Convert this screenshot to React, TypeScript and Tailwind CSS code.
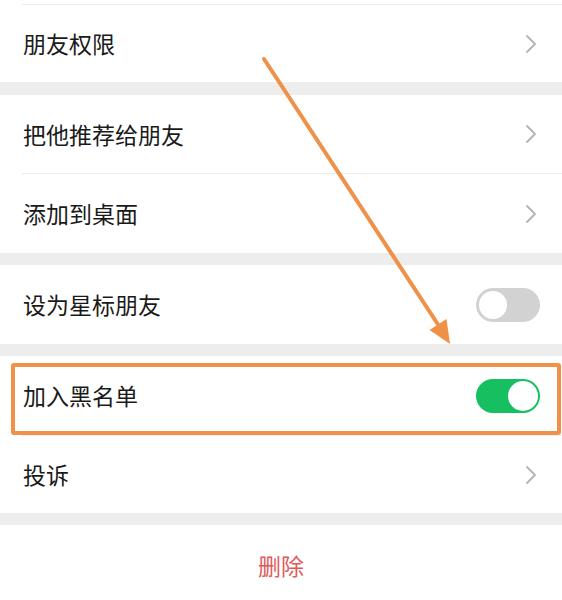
import React from "react";

const font = { fontFamily: '"Noto Sans CJK SC", "Noto Sans", sans-serif' };

function Chevron() {
  return (
    <svg width="14" height="20" viewBox="0 0 14 20" className="mr-[24px]">
      <path d="M3 2 L11 10 L3 18" fill="none" stroke="#b3b3b3" strokeWidth="1.8" strokeLinecap="round" strokeLinejoin="round" />
    </svg>
  );
}

function Switch({ on }: { on: boolean }) {
  return on ? (
    <div className="mr-[22px] flex h-[34px] w-[64px] items-center justify-end rounded-full bg-[#16c060] p-[2px]">
      <div className="h-[30px] w-[30px] rounded-full bg-white" />
    </div>
  ) : (
    <div className="mr-[22px] flex h-[34px] w-[64px] items-center justify-start rounded-full bg-[#d2d2d2] p-[1px]">
      <div className="h-[32px] w-[32px] rounded-full border-[2px] border-[#d2d2d2] bg-white" />
    </div>
  );
}

function Row({ label, h, right }: { label: string; h: string; right: React.ReactNode }) {
  return (
    <div className={`flex items-center justify-between bg-white ${h}`}>
      <span className="pl-[23px] text-[23px] leading-none text-[#1a1a1a]">{label}</span>
      {right}
    </div>
  );
}

function Sep() {
  return (
    <div className="bg-white pl-[22px]">
      <div className="h-px bg-[#ececec]" />
    </div>
  );
}

function Gap({ h }: { h: string }) {
  return <div className={`${h} bg-[#ededed]`} />;
}

export default function App() {
  return (
    <div className="relative h-[600px] w-[562px] overflow-hidden bg-white" style={font}>
      <div className="h-[4px] bg-white" />
      <Sep />
      <Row label="朋友权限" h="h-[77px]" right={<Chevron />} />
      <Gap h="h-[13px]" />
      <Row label="把他推荐给朋友" h="h-[78px]" right={<Chevron />} />
      <Sep />
      <Row label="添加到桌面" h="h-[79px]" right={<Chevron />} />
      <Gap h="h-[12px]" />
      <Row label="设为星标朋友" h="h-[79px]" right={<Switch on={false} />} />
      <Gap h="h-[12px]" />
      <Row label="加入黑名单" h="h-[79px]" right={<Switch on={true} />} />
      <Sep />
      <Row label="投诉" h="h-[77px]" right={<Chevron />} />
      <Gap h="h-[12px]" />
      <div className="flex h-[80px] items-center justify-center bg-white">
        <span className="text-[23px] leading-none text-[#e05a5c]">删除</span>
      </div>

      {/* highlight box */}
      <div className="pointer-events-none absolute left-[11px] top-[363px] h-[72px] w-[550px] rounded-[3px] border-[4px] border-[#ef9149]" />

      {/* arrow annotation */}
      <svg className="pointer-events-none absolute left-0 top-0" width="562" height="600" viewBox="0 0 562 600">
        <line x1="264" y1="59" x2="439" y2="326" stroke="#ef9149" strokeWidth="4" strokeLinecap="round" />
        <polygon points="450,344 429.5,330 446.5,319" fill="#ef9149" />
      </svg>
    </div>
  );
}
